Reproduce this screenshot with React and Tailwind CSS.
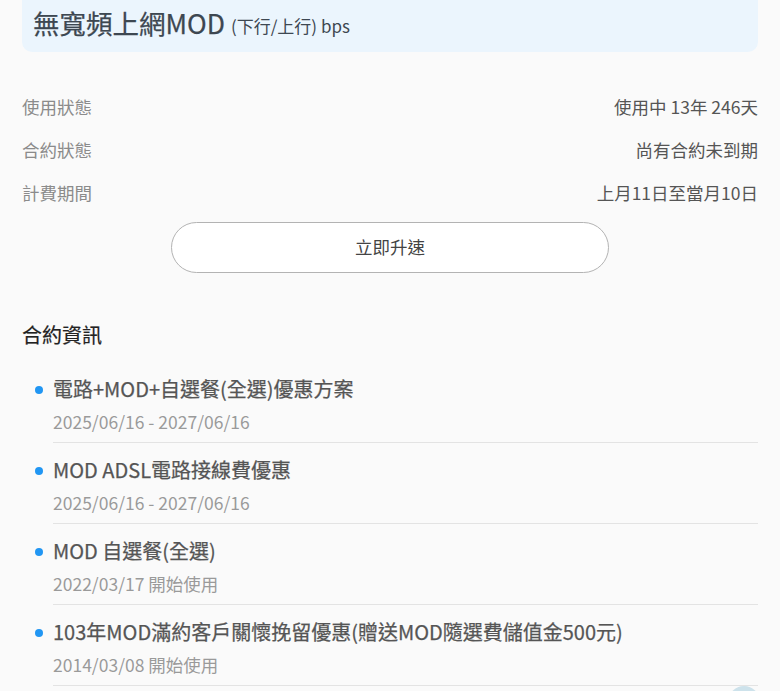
export default function App() {
  const items = [
    { t: "電路+MOD+自選餐(全選)優惠方案", d: "2025/06/16 - 2027/06/16" },
    { t: "MOD ADSL電路接線費優惠", d: "2025/06/16 - 2027/06/16" },
    { t: "MOD 自選餐(全選)", d: "2022/03/17 開始使用" },
    { t: "103年MOD滿約客戶關懷挽留優惠(贈送MOD隨選費儲值金500元)", d: "2014/03/08 開始使用" },
  ];
  const rows = [
    ["使用狀態", "使用中 13年 246天"],
    ["合約狀態", "尚有合約未到期"],
    ["計費期間", "上月11日至當月10日"],
  ];
  return (
    <div className="relative min-h-[691px] h-[691px] overflow-hidden bg-[#fafafa] px-[22px] font-['Noto_Sans_CJK_TC','Noto_Sans',sans-serif]">
      <div className="h-[52px] rounded-b-[10px] bg-[#ebf5fd] flex items-center pl-[11px] pb-[5px]">
        <span className="text-[26.5px] text-[#3d4751] leading-none [-webkit-text-stroke:0.25px_#3d4751]">無寬頻上網MOD</span>
        <span className="ml-[6px] text-[17px] text-[#3d4751] leading-none mt-[4px]">(下行/上行) bps</span>
      </div>
      <div className="mt-[42px] flex flex-col gap-[18px]">
        {rows.map(([l, v]) => (
          <div key={l} className="flex justify-between items-center h-[25px] text-[17.5px] leading-none">
            <span className="text-[#8b8b8b]">{l}</span>
            <span className="text-[#555]">{v}</span>
          </div>
        ))}
      </div>
      <div className="mt-[17px] flex justify-center">
        <button className="w-[438px] h-[51px] rounded-full border border-[#b3b3b3] bg-white text-[17.5px] text-[#444]">立即升速</button>
      </div>
      <div className="mt-[52px] text-[20px] text-[#222] leading-none [-webkit-text-stroke:0.2px_#222]">合約資訊</div>
      <div className="mt-[30px]">
        {items.map((it) => (
          <div key={it.t} className="flex">
            <div className="w-[31px] flex justify-start pl-[13px] pt-[11px]">
              <div className="w-[8px] h-[8px] rounded-full bg-[#2196f3]"></div>
            </div>
            <div className="flex-1 border-b border-[#e3e3e3] pb-[8px] mb-[13px]">
              <div className="text-[20px] text-[#555] leading-[28px] [-webkit-text-stroke:0.25px_#555]">{it.t}</div>
              <div className="mt-[7px] text-[17.5px] text-[#9a9a9a] leading-[24px]">{it.d}</div>
            </div>
          </div>
        ))}
      </div>
      <div className="absolute left-[728px] top-[686px] w-[32px] h-[32px] rounded-full bg-[#b9d7e4] opacity-70"></div>
    </div>
  );
}
